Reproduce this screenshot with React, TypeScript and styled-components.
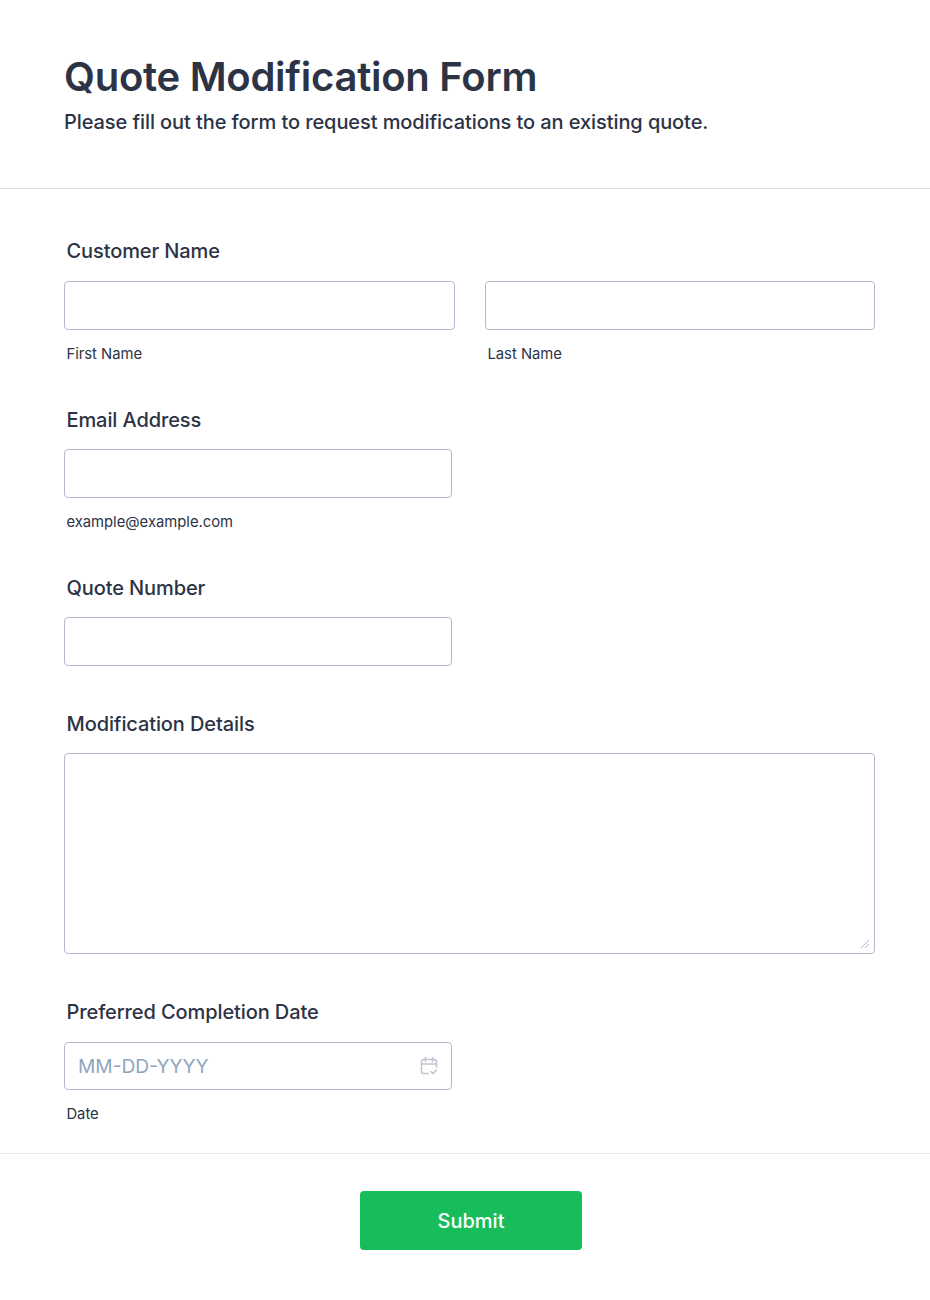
import React from "react";
import styled, { createGlobalStyle } from "styled-components";

const Global = createGlobalStyle`
  html, body { margin: 0; padding: 0; background: #fff; }
  body { font-family: Inter, "Liberation Sans", sans-serif; color: #2c3345; }
  * { box-sizing: border-box; }
`;

const Page = styled.div`
  width: 930px;
  height: 1300px;
  display: flex;
  flex-direction: column;
  overflow: hidden;
`;

const Header = styled.header`
  height: 189px;
  padding: 53px 64px 0;
  border-bottom: 1px solid #dcdfe8;
`;

const Title = styled.h1`
  margin: 0;
  font-size: 40px;
  line-height: 48px;
  font-weight: 600;
  letter-spacing: -0.26px;
  color: #2c3345;
`;

const Subtitle = styled.p`
  margin: 0;
  padding-top: 7px;
  font-size: 20px;
  line-height: 28px;
  font-weight: 500;
  letter-spacing: -0.085px;
  color: #2c3345;
`;

const Form = styled.form`
  flex: 1;
  display: flex;
  flex-direction: column;
  padding: 50px 55px 0 64px;
`;

const Field = styled.div<{ $after: number }>`
  display: flex;
  flex-direction: column;
  margin-bottom: ${(p) => p.$after}px;
`;

const Label = styled.label`
  padding-left: 2.5px;
  height: 24px;
  font-size: 20px;
  line-height: 24px;
  font-weight: 500;
  letter-spacing: -0.1px;
  margin-bottom: 17.5px;
  color: #2c3345;
`;

const Row = styled.div`
  display: grid;
  grid-template-columns: 391px 390px;
  column-gap: 30px;
`;

const Cell = styled.div`
  display: flex;
  flex-direction: column;
`;

const Input = styled.input<{ $width?: number }>`
  display: block;
  width: ${(p) => (p.$width ? `${p.$width}px` : "100%")};
  height: 49px;
  background: #fff;
  border: 1px solid #b4b9cc;
  border-radius: 4px;
  outline: none;
`;

const Sub = styled.span`
  padding-left: 2.4px;
  margin-top: 15px;
  height: 18px;
  font-size: 14.8px;
  line-height: 18px;
  color: #2c3345;
`;

const TextAreaWrap = styled.div`
  position: relative;
  width: 811px;
  height: 201px;
`;

const TextArea = styled.textarea`
  display: block;
  width: 100%;
  height: 100%;
  background: #fff;
  border: 1px solid #b4b9cc;
  border-radius: 4px;
  outline: none;
  resize: none;
`;

const Grip = styled.svg`
  position: absolute;
  right: 5px;
  bottom: 5px;
  width: 10px;
  height: 10px;
  fill: none;
  stroke: #b4b8c4;
  stroke-width: 1;
`;

const DateBox = styled.div`
  width: 388px;
  height: 48.5px;
  border: 1px solid #b4b9cc;
  border-radius: 4px;
  display: flex;
  align-items: center;
  justify-content: space-between;
  padding: 0 12px 0 13px;
`;

const Placeholder = styled.span`
  font-size: 19.2px;
  font-weight: 400;
  color: #8fa5bd;
`;

const CalendarIcon = styled.svg`
  width: 20px;
  height: 20px;
  fill: none;
  stroke: #c0c4d0;
  stroke-width: 1.5;
  stroke-linecap: round;
  stroke-linejoin: round;
`;

const Footer = styled.footer`
  height: 147px;
  border-top: 1px solid #e8ebf0;
  padding: 37px 0 0 12px;
  display: flex;
  justify-content: center;
  align-items: flex-start;
`;

const Submit = styled.button`
  width: 222px;
  height: 59px;
  border: none;
  border-radius: 4px;
  background: #18bd5b;
  color: #fff;
  font-family: inherit;
  font-size: 20px;
  font-weight: 500;
`;

export default function App() {
  return (
    <>
      <Global />
      <Page>
        <Header>
          <Title>Quote Modification Form</Title>
          <Subtitle>Please fill out the form to request modifications to an existing quote.</Subtitle>
        </Header>
        <Form>
          <Field $after={45.2}>
            <Label>Customer Name</Label>
            <Row>
              <Cell>
                <Input />
                <Sub>First Name</Sub>
              </Cell>
              <Cell>
                <Input />
                <Sub>Last Name</Sub>
              </Cell>
            </Row>
          </Field>
          <Field $after={44.7}>
            <Label>Email Address</Label>
            <Input $width={388} />
            <Sub>example@example.com</Sub>
          </Field>
          <Field $after={45.2}>
            <Label>Quote Number</Label>
            <Input $width={388} />
          </Field>
          <Field $after={46}>
            <Label>Modification Details</Label>
            <TextAreaWrap>
              <TextArea />
              <Grip viewBox="0 0 10 10">
                <path d="M1 9L9 1M5 9L9 5" />
              </Grip>
            </TextAreaWrap>
          </Field>
          <Field $after={0}>
            <Label>Preferred Completion Date</Label>
            <DateBox>
              <Placeholder>MM-DD-YYYY</Placeholder>
              <CalendarIcon viewBox="0 0 20 20">
                <path d="M9 17.5H4.5a2 2 0 0 1-2-2V5.5a2 2 0 0 1 2-2h11a2 2 0 0 1 2 2V11" />
                <path d="M2.5 8h15M6.5 1.5v4M13.5 1.5v4" />
                <path d="M12 15.5l2 2 3.5-3.5" />
              </CalendarIcon>
            </DateBox>
            <Sub>Date</Sub>
          </Field>
        </Form>
        <Footer>
          <Submit type="button">Submit</Submit>
        </Footer>
      </Page>
    </>
  );
}
